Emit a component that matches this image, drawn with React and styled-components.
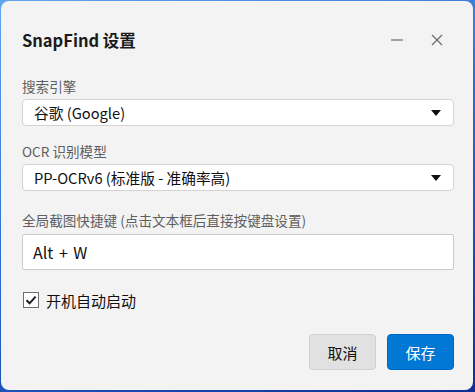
import styled, { createGlobalStyle } from "styled-components";

const Global = createGlobalStyle`
    html, body {
        margin: 0;
        padding: 0;
        width: 475px;
        height: 392px;
        overflow: hidden;
        background: linear-gradient(160deg, #5fa6ea 0%, #2a6fd6 45%, #0d2f95 100%);
        font-family: "Noto Sans CJK SC", "Noto Sans", sans-serif;
    }
`
const Window = styled.div`
    box-sizing: border-box;
    margin: 1px 0 0 1px;
    width: 472px;
    height: 389px;
    background-color: #f3f3f3;
    border-radius: 8px;
    padding: 28px 19px 20px 21px;
    display: flex;
    flex-direction: column;
`
const TitleBar = styled.div`
    display: flex;
    align-items: center;
    justify-content: space-between;
    height: 22px;
`
const Title = styled.h1`
    margin: 0;
    font-size: 16.5px;
    line-height: 22px;
    font-weight: 700;
    color: #1b1b1b;
`
const Controls = styled.div`
    display: flex;
    align-items: center;
    gap: 28px;
    margin-right: 11px;
`
const IconButton = styled.span`
    display: flex;
    width: 12px;
    height: 12px;
    color: #6a6a6a;
`
const Label = styled.div`
    margin-top: ${p => p.$top}px;
    font-size: 13.6px;
    line-height: 18px;
    color: #5f5f5f;
`
const Select = styled.div`
    box-sizing: border-box;
    margin-top: 4px;
    height: 27px;
    background-color: #fff;
    border: 1px solid #d3d3d3;
    border-radius: 4px;
    padding: 0 12px 0 11px;
    display: flex;
    align-items: center;
    justify-content: space-between;
    font-size: 14.7px;
    color: #111;
`
const Arrow = styled.span`
    width: 0;
    height: 0;
    border-left: 5px solid transparent;
    border-right: 5px solid transparent;
    border-top: 6px solid #111;
`
const Input = styled.div`
    box-sizing: border-box;
    margin-top: 5px;
    height: 36px;
    background-color: #fff;
    border: 1px solid #cdcdcd;
    border-radius: 2px;
    padding: 0 10px;
    display: flex;
    align-items: center;
    font-size: 16px;
    word-spacing: 2px;
    color: #111;
`
const CheckRow = styled.label`
    margin-top: 21px;
    display: flex;
    align-items: center;
    gap: 7px;
    height: 18px;
    font-size: 15px;
    color: #111;
    padding-left: 1px;
`
const Box = styled.span`
    box-sizing: border-box;
    width: 16px;
    height: 16px;
    border: 1px solid #6e6e6e;
    background-color: #fff;
    display: flex;
    align-items: center;
    justify-content: center;
`
const Footer = styled.div`
    margin-top: auto;
    display: flex;
    justify-content: flex-end;
    gap: 11px;
`
const Button = styled.button`
    box-sizing: border-box;
    width: 67px;
    height: 36px;
    border-radius: 4px;
    font-family: inherit;
    font-size: 15px;
    border: 1px solid ${p => p.$primary ? "#0067c0" : "#cfcfcf"};
    background-color: ${p => p.$primary ? "#0078d4" : "#e1e1e1"};
    color: ${p => p.$primary ? "#fff" : "#111"};
    padding: 0;
`

const App = () => {
    return (
        <>
            <Global />
            <Window>
                <TitleBar>
                    <Title>SnapFind 设置</Title>
                    <Controls>
                        <IconButton>
                            <svg width="12" height="12" viewBox="0 0 12 12">
                                <line x1="0" y1="6" x2="12" y2="6" stroke="currentColor" strokeWidth="1.2" />
                            </svg>
                        </IconButton>
                        <IconButton>
                            <svg width="12" height="12" viewBox="0 0 12 12">
                                <path d="M1 1 L11 11 M11 1 L1 11" stroke="currentColor" strokeWidth="1.2" />
                            </svg>
                        </IconButton>
                    </Controls>
                </TitleBar>

                <Label $top={26}>搜索引擎</Label>
                <Select>
                    <span>谷歌 (Google)</span>
                    <Arrow />
                </Select>

                <Label $top={16}>OCR 识别模型</Label>
                <Select>
                    <span>PP-OCRv6 (标准版 - 准确率高)</span>
                    <Arrow />
                </Select>

                <Label $top={20}>全局截图快捷键 (点击文本框后直接按键盘设置)</Label>
                <Input>Alt + W</Input>

                <CheckRow>
                    <Box>
                        <svg width="12" height="12" viewBox="0 0 12 12">
                            <path d="M1.5 6.2 L4.6 9.3 L10.6 2.6" fill="none" stroke="#1e1e1e" strokeWidth="2" />
                        </svg>
                    </Box>
                    开机自动启动
                </CheckRow>

                <Footer>
                    <Button>取消</Button>
                    <Button $primary>保存</Button>
                </Footer>
            </Window>
        </>
    )
}

export default App
